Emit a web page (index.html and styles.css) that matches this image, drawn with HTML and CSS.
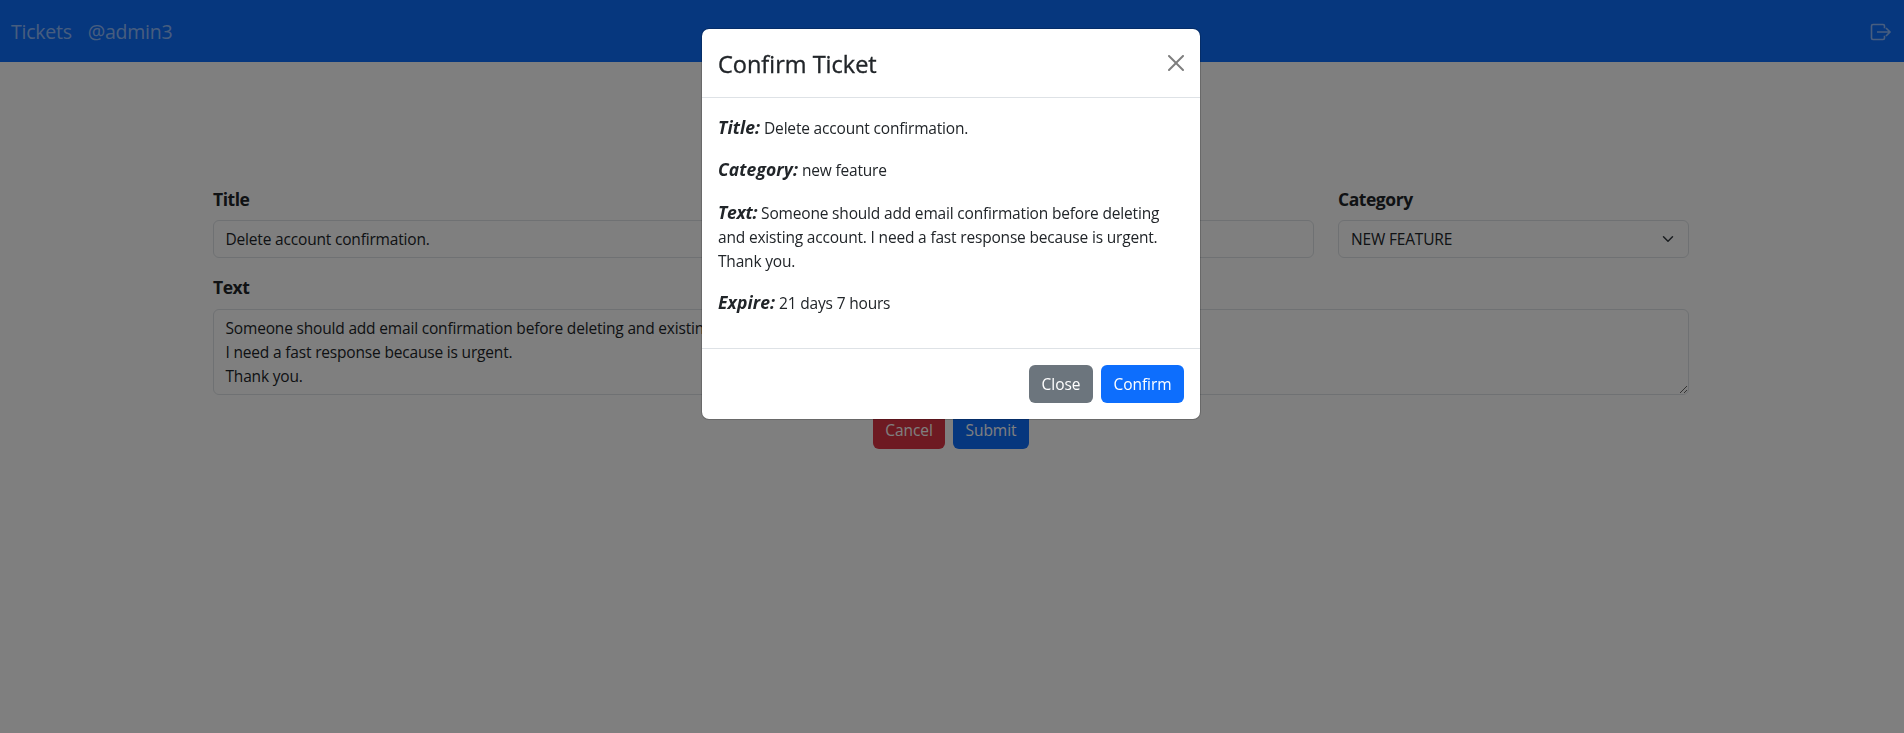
FILE: index.html
```html
<!DOCTYPE html>
<html lang="en">
<head>
<meta charset="utf-8">
<title>Tickets</title>
<link rel="stylesheet" href="styles.css">
</head>
<body>
<nav class="navbar">
  <div class="nav-links"><a class="nav-tickets">Tickets</a><a class="nav-user">@admin3</a></div>
  <svg class="logout" width="22" height="22" viewBox="0 0 22 22" fill="none" stroke="currentColor" stroke-width="1.6">
    <path d="M14.500 7.200V5a1.500 1.500 0 0 0-1.500-1.500H3A1.500 1.500 0 0 0 1.500 5v12A1.500 1.500 0 0 0 3 18.500h10A1.500 1.500 0 0 0 14.500 17v-2.200M7 11h13M16 7l4 4-4 4"/>
  </svg>
</nav>
<main class="form">
  <div class="row">
    <div class="field"><label class="label label-title">Title</label><input class="control control-title" value="Delete account confirmation."></div>
    <div class="field"><label class="label label-title">Category</label>
      <div class="control select"><span>NEW FEATURE</span>
        <svg width="16" height="12" viewBox="0 0 16 16" fill="none" stroke="#343a40" stroke-width="2" stroke-linecap="round" stroke-linejoin="round"><path d="m2 5 6 6 6-6"/></svg>
      </div>
    </div>
  </div>
  <div class="field"><label class="label label-text">Text</label>
<textarea class="control area">Someone should add email confirmation before deleting and existing account.
I need a fast response because is urgent.
Thank you.</textarea></div>
  <div class="actions"><button class="btn cancel">Cancel</button><button class="btn submit">Submit</button></div>
</main>
<div class="backdrop">
  <section class="modal">
    <header class="modal-header"><h5 class="modal-title">Confirm Ticket</h5>
      <svg class="close-icon" width="16" height="16" viewBox="0 0 16 16"><path d="M.293.293a1 1 0 0 1 1.414 0L8 6.586 14.293.293a1 1 0 1 1 1.414 1.414L9.414 8l6.293 6.293a1 1 0 0 1-1.414 1.414L8 9.414l-6.293 6.293a1 1 0 0 1-1.414-1.414L6.586 8 .293 1.707a1 1 0 0 1 0-1.414z"/></svg>
    </header>
    <div class="modal-body">
      <p><em>Title:</em> Delete account confirmation.</p>
      <p><em>Category:</em> new feature</p>
      <p><em class="k-text">Text:</em> Someone should add email confirmation before deleting<br>and existing account. I need a fast response because is urgent.<br>Thank you.</p>
      <p><em>Expire:</em> 21 days 7 hours</p>
    </div>
    <footer class="modal-footer"><button class="btn close">Close</button><button class="btn confirm">Confirm</button></footer>
  </section>
</div>
</body>
</html>
```
FILE: styles.css
```css
* { box-sizing: border-box; }
body { margin: 0; height: 733px; overflow: hidden; background: #fff; color: #212529; font: 400 15.5px/24px "Open Sans", "Noto Sans", sans-serif; letter-spacing: -0.18px; }
.navbar { height: 62px; background: #0d6efd; color: rgba(255,255,255,.55); display: flex; align-items: center; justify-content: space-between; padding: 2px 12px 0 11px; }
.nav-links { display: flex; gap: 16px; font-size: 19.500px; letter-spacing: -0.25px; }
.form { width: 1476px; margin: 123px 0 0 213px; }
.row { display: grid; grid-template-columns: 1101px 351px; gap: 24px; margin-bottom: 16px; }
.field { display: block; }
.label { display: block; height: 27px; line-height: 27px; font-size: 17.500px; font-weight: 700; margin-bottom: 8px; letter-spacing: -0.45px; }
.label-title { padding-top: 1px; }
.control { display: block; width: 100%; height: 38px; border: 1px solid #dee2e6; border-radius: 6px; padding: 6px 12px 6px 11.500px; background: #fff; color: #212529; font: inherit; letter-spacing: inherit; outline: 0; }
.select { display: flex; justify-content: space-between; align-items: center; padding-left: 12px; }
.area { height: 86px; resize: vertical; overflow: hidden; letter-spacing: -0.18px; }
.actions { margin-top: 16px; display: flex; justify-content: center; gap: 8px; }
.btn { height: 38px; border: 0; border-radius: 6px; padding: 0; color: #fff; font: inherit; letter-spacing: -0.05px; text-align: center; }
.cancel { width: 72px; background: #dc3545; }
.submit { width: 76px; background: #0d6efd; }
.close { width: 64px; background: #6c757d; }
.confirm { width: 83px; background: #0d6efd; }
.backdrop { position: fixed; inset: 0; background: rgba(0,0,0,.5); padding: 28px 0 0 701px; }
.modal { width: 500px; height: 392px; background: #fff; background-clip: padding-box; border: 1px solid rgba(0,0,0,.175); border-radius: 8px; }
.modal-header { display: flex; align-items: center; justify-content: space-between; height: 69px; padding: 0 16px; border-bottom: 1px solid #dee2e6; }
.modal-title { margin: 0; padding-top: 2px; font-size: 23.500px; line-height: 36px; font-weight: 500; letter-spacing: 0; -webkit-text-stroke: 0.35px #212529; }
.close-icon { opacity: .5; }
.modal-body { height: 250px; padding: 15px 16px; letter-spacing: -0.18px; white-space: nowrap; }
.modal-body p { margin: 0 0 16px; padding-top: 2.500px; }
.modal-body em { font-size: 17.500px; line-height: 0; font-weight: 700; letter-spacing: 0.1px; }
.modal-body .k-text { letter-spacing: -0.25px; }
.modal-footer { height: 71px; border-top: 1px solid #dee2e6; padding: 16px; display: flex; justify-content: flex-end; gap: 8px; }
```
